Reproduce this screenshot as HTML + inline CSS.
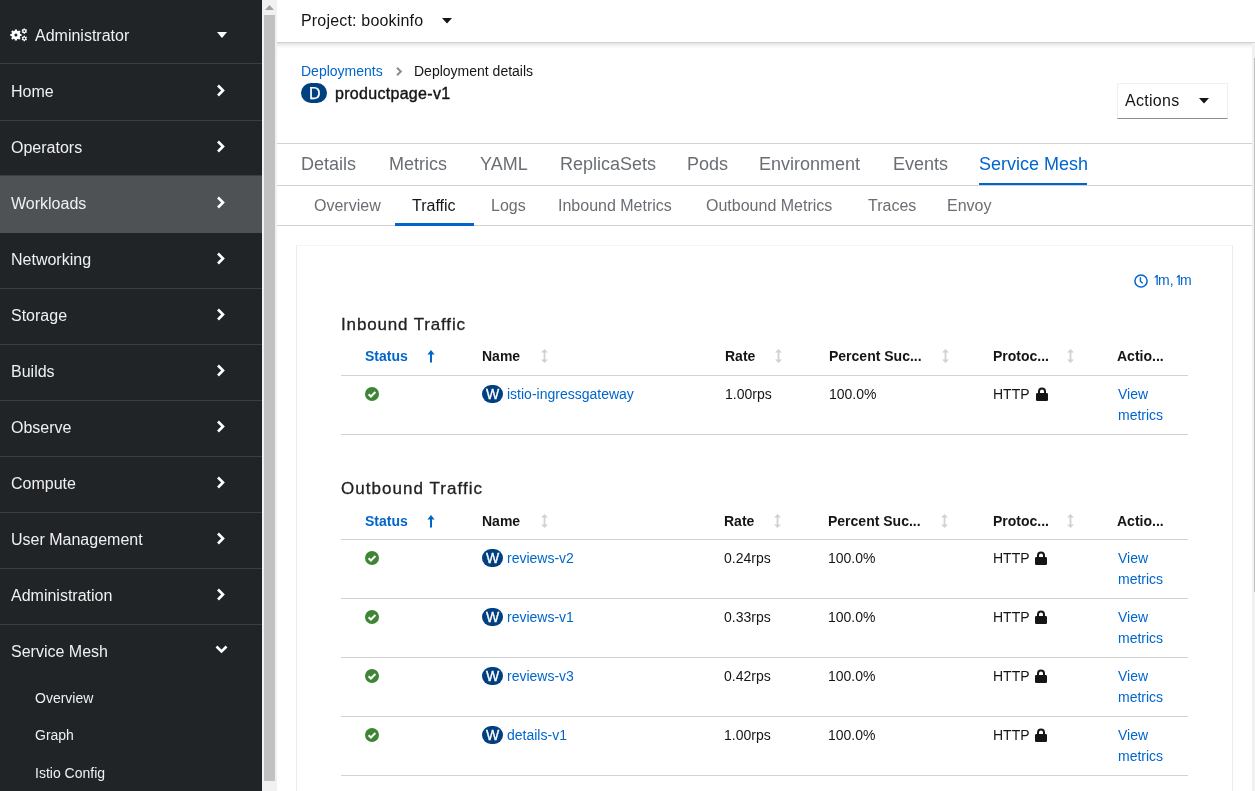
<!DOCTYPE html>
<html><head><meta charset="utf-8">
<style>
*{box-sizing:border-box;margin:0;padding:0}
html,body{-webkit-font-smoothing:antialiased;width:1255px;height:791px;overflow:hidden;background:#fff;font-family:"Liberation Sans",sans-serif;color:#151515}
.a{position:absolute;will-change:transform;white-space:nowrap;line-height:1}
#nav{position:absolute;left:0;top:0;width:262px;height:791px;background:#212427}
.nt{color:#f0f0f0;font-size:16px}
.dv{position:absolute;left:0;width:262px;height:1px;background:#3c3f42}
.chev{position:absolute;left:216px;width:10px;height:13px}
#sb{position:absolute;left:262px;top:0;width:15px;height:791px;background:#f1f1f1}
#main{position:absolute;left:277px;top:0;width:978px;height:791px;background:#fff}
.tab{font-size:18px;color:#6a6e73}
.stab{font-size:16px;color:#6a6e73}
.hd{font-size:14px;font-weight:bold;color:#151515}
.cell{font-size:14px;color:#151515}
.lnk{color:#0066cc}
.bdr{position:absolute;height:1px;background:#d2d2d2}
.badge{position:absolute;background:#004080;color:#fff;border-radius:10px;text-align:center}
</style></head><body>
<div id="nav">
  <!-- gear -->
  <svg class="a" style="left:10px;top:28px" width="18" height="14" viewBox="0 0 18 14"><path fill="#fff" fill-rule="evenodd" d="M4.78 2.64 L4.79 1.41 L7.01 1.41 L7.02 2.64 L8.19 3.13 L9.07 2.26 L10.64 3.83 L9.77 4.71 L10.26 5.88 L11.49 5.89 L11.49 8.11 L10.26 8.12 L9.77 9.29 L10.64 10.17 L9.07 11.74 L8.19 10.87 L7.02 11.36 L7.01 12.59 L4.79 12.59 L4.78 11.36 L3.61 10.87 L2.73 11.74 L1.16 10.17 L2.03 9.29 L1.54 8.12 L0.31 8.11 L0.31 5.89 L1.54 5.88 L2.03 4.71 L1.16 3.83 L2.73 2.26 L3.61 3.13ZM7.40 7.00a1.5 1.5 0 1 0 -3.00 0a1.5 1.5 0 1 0 3.00 0ZM13.61 1.12 L13.58 0.40 L15.02 0.40 L14.99 1.12 L15.67 1.51 L16.28 1.12 L17.00 2.38 L16.36 2.71 L16.36 3.49 L17.00 3.82 L16.28 5.08 L15.67 4.69 L14.99 5.08 L15.02 5.80 L13.58 5.80 L13.61 5.08 L12.93 4.69 L12.32 5.08 L11.60 3.82 L12.24 3.49 L12.24 2.71 L11.60 2.38 L12.32 1.12 L12.93 1.51ZM15.20 3.10a0.9 0.9 0 1 0 -1.80 0a0.9 0.9 0 1 0 1.80 0ZM13.61 8.52 L13.58 7.80 L15.02 7.80 L14.99 8.52 L15.67 8.91 L16.28 8.52 L17.00 9.78 L16.36 10.11 L16.36 10.89 L17.00 11.22 L16.28 12.48 L15.67 12.09 L14.99 12.48 L15.02 13.20 L13.58 13.20 L13.61 12.48 L12.93 12.09 L12.32 12.48 L11.60 11.22 L12.24 10.89 L12.24 10.11 L11.60 9.78 L12.32 8.52 L12.93 8.91ZM15.20 10.50a0.9 0.9 0 1 0 -1.80 0a0.9 0.9 0 1 0 1.80 0Z"/></svg>
  <div class="a nt" style="left:35px;top:27.5px">Administrator</div>
  <svg class="a" style="left:217px;top:32px" width="10" height="7" viewBox="0 0 10 7"><path fill="#fff" d="M0 0h10L5 6z"/></svg>

  <div class="dv" style="top:63px"></div>
  <div class="a nt" style="left:11px;top:83.6px">Home</div>
  <div class="dv" style="top:120px"></div>
  <div class="a nt" style="left:11px;top:139.6px">Operators</div>
  <div class="dv" style="top:175px"></div>
  <div style="position:absolute;left:0;top:176px;width:262px;height:56.5px;background:#4f5255"></div>
  <div class="a nt" style="left:11px;top:195.6px">Workloads</div>
  <div class="dv" style="top:231px;display:none"></div>
  <div class="a nt" style="left:11px;top:251.6px">Networking</div>
  <div class="dv" style="top:288px"></div>
  <div class="a nt" style="left:11px;top:307.6px">Storage</div>
  <div class="dv" style="top:344px"></div>
  <div class="a nt" style="left:11px;top:363.6px">Builds</div>
  <div class="dv" style="top:400px"></div>
  <div class="a nt" style="left:11px;top:419.6px">Observe</div>
  <div class="dv" style="top:456px"></div>
  <div class="a nt" style="left:11px;top:475.6px">Compute</div>
  <div class="dv" style="top:512px"></div>
  <div class="a nt" style="left:11px;top:531.6px">User Management</div>
  <div class="dv" style="top:568px"></div>
  <div class="a nt" style="left:11px;top:587.6px">Administration</div>
  <div class="dv" style="top:624px"></div>
  <div class="a nt" style="left:11px;top:643.6px">Service Mesh</div>
  <div class="a nt" style="left:35px;top:691.2px;font-size:14px">Overview</div>
  <div class="a nt" style="left:35px;top:728.3px;font-size:14px">Graph</div>
  <div class="a nt" style="left:35px;top:765.7px;font-size:14px">Istio Config</div>

  <svg class="chev" style="top:84px" viewBox="0 0 10 13"><path fill="none" stroke="#fff" stroke-width="2.6" d="M2 1.5l5 5-5 5"/></svg>
  <svg class="chev" style="top:140px" viewBox="0 0 10 13"><path fill="none" stroke="#fff" stroke-width="2.6" d="M2 1.5l5 5-5 5"/></svg>
  <svg class="chev" style="top:196px" viewBox="0 0 10 13"><path fill="none" stroke="#fff" stroke-width="2.6" d="M2 1.5l5 5-5 5"/></svg>
  <svg class="chev" style="top:252px" viewBox="0 0 10 13"><path fill="none" stroke="#fff" stroke-width="2.6" d="M2 1.5l5 5-5 5"/></svg>
  <svg class="chev" style="top:308px" viewBox="0 0 10 13"><path fill="none" stroke="#fff" stroke-width="2.6" d="M2 1.5l5 5-5 5"/></svg>
  <svg class="chev" style="top:364px" viewBox="0 0 10 13"><path fill="none" stroke="#fff" stroke-width="2.6" d="M2 1.5l5 5-5 5"/></svg>
  <svg class="chev" style="top:420px" viewBox="0 0 10 13"><path fill="none" stroke="#fff" stroke-width="2.6" d="M2 1.5l5 5-5 5"/></svg>
  <svg class="chev" style="top:476px" viewBox="0 0 10 13"><path fill="none" stroke="#fff" stroke-width="2.6" d="M2 1.5l5 5-5 5"/></svg>
  <svg class="chev" style="top:532px" viewBox="0 0 10 13"><path fill="none" stroke="#fff" stroke-width="2.6" d="M2 1.5l5 5-5 5"/></svg>
  <svg class="chev" style="top:588px" viewBox="0 0 10 13"><path fill="none" stroke="#fff" stroke-width="2.6" d="M2 1.5l5 5-5 5"/></svg>
  <svg class="a" style="left:215px;top:644px" width="13" height="11" viewBox="0 0 13 11"><path fill="none" stroke="#fff" stroke-width="2.6" d="M1.5 2.5l5 5 5-5"/></svg>
</div>

<div id="sb">
  <svg class="a" style="left:3px;top:5px" width="9" height="6" viewBox="0 0 9 6"><path fill="#a3a3a3" d="M4.5 0L9 5H0z"/></svg>
  <div style="position:absolute;left:2px;top:15px;width:11px;height:766px;background:#c1c1c1"></div>
</div>

<div id="main"></div>
<div style="position:absolute;left:277px;top:0;width:978px;height:42px;background:#fff"></div>
<div style="position:absolute;left:277px;top:42px;width:978px;height:1px;background:#d2d2d2"></div>
<div style="position:absolute;left:277px;top:43px;width:975px;height:6px;background:linear-gradient(#e2e2e2,#f6f6f6 50%,#fff)"></div>
<div class="a " style="left:301px;top:13.3px;font-size:16px;letter-spacing:.18px">Project: bookinfo</div>
<svg class="a" style="left:442px;top:18px" width="10" height="6" viewBox="0 0 10 6"><path fill="#151515" d="M0 0h10L5 5.5z"/></svg>
<div class="a " style="left:301px;top:63.85px;font-size:14px;color:#0066cc">Deployments</div>
<svg class="a" style="left:396px;top:67px" width="7" height="9" viewBox="0 0 7 9"><path fill="none" stroke="#8a8d90" stroke-width="2" d="M1 .8l3.8 3.7L1 8.2"/></svg>
<div class="a " style="left:414px;top:63.85px;font-size:14px;">Deployment details</div>
<div class="badge" style="left:301px;top:83px;width:26px;height:20px;border-radius:10px"></div>
<div class="a " style="left:308.5px;top:86.3px;font-size:16px;color:#fff;-webkit-text-stroke:.25px #fff">D</div>
<div class="a " style="left:335px;top:85.8px;font-size:16px;letter-spacing:.3px;-webkit-text-stroke:.4px #151515">productpage-v1</div>
<div style="position:absolute;left:1117px;top:83px;width:111px;height:36px;border:1px solid #f0f0f0;border-bottom-color:#8a8d90"></div>
<div class="a " style="left:1125px;top:92.66px;font-size:16px;letter-spacing:.3px">Actions</div>
<svg class="a" style="left:1199px;top:98px" width="10" height="6" viewBox="0 0 10 6"><path fill="#151515" d="M0 0h10L5 5.5z"/></svg>
<div class="bdr" style="left:277px;top:143px;width:978px"></div>
<div class="bdr" style="left:277px;top:185px;width:978px"></div>
<div class="a tab" style="left:301px;top:154.66px;font-size:18px;">Details</div>
<div class="a tab" style="left:389px;top:154.66px;font-size:18px;">Metrics</div>
<div class="a tab" style="left:480px;top:154.66px;font-size:18px;">YAML</div>
<div class="a tab" style="left:560px;top:154.66px;font-size:18px;">ReplicaSets</div>
<div class="a tab" style="left:687px;top:154.66px;font-size:18px;">Pods</div>
<div class="a tab" style="left:759px;top:154.66px;font-size:18px;">Environment</div>
<div class="a tab" style="left:893px;top:154.66px;font-size:18px;">Events</div>
<div class="a " style="left:979px;top:154.66px;font-size:18px;color:#0066cc">Service Mesh</div>
<div style="position:absolute;left:979px;top:183px;width:108px;height:2px;background:#0066cc"></div>
<div class="a stab" style="left:313.5px;top:198.46px;font-size:16px;">Overview</div>
<div class="a stab" style="left:490.8px;top:198.46px;font-size:16px;">Logs</div>
<div class="a stab" style="left:557.8px;top:198.46px;font-size:16px;">Inbound Metrics</div>
<div class="a stab" style="left:705.8px;top:198.46px;font-size:16px;">Outbound Metrics</div>
<div class="a stab" style="left:868px;top:198.46px;font-size:16px;">Traces</div>
<div class="a stab" style="left:946.7px;top:198.46px;font-size:16px;">Envoy</div>
<div class="a " style="left:412px;top:198.46px;font-size:16px;">Traffic</div>
<div class="bdr" style="left:277px;top:225px;width:978px"></div>
<div style="position:absolute;left:395px;top:223px;width:79px;height:3px;background:#0066cc"></div>
<div style="position:absolute;left:296px;top:245px;width:937px;height:600px;border:1px solid #ececec;border-top-color:#f4f4f4"></div>
<svg class="a" style="left:1134px;top:274px" width="14" height="14" viewBox="0 0 14 14"><circle cx="7" cy="7" r="6.1" fill="none" stroke="#0066cc" stroke-width="1.5"/><path fill="none" stroke="#0066cc" stroke-width="1.4" d="M6.4 3.2v4l2.3 2"/></svg>
<svg class="a" style="left:1153.5px;top:275px" width="4" height="10" viewBox="0 0 4 10"><path fill="#0066cc" d="M2.5 0H3.8V10H2.5V1.9L0.6 3.1V1.9z"/></svg><div class="a" style="left:1157.9px;top:273.15px;font-size:14px;color:#0066cc">m,</div><svg class="a" style="left:1175.6px;top:275px" width="4" height="10" viewBox="0 0 4 10"><path fill="#0066cc" d="M2.5 0H3.8V10H2.5V1.9L0.6 3.1V1.9z"/></svg><div class="a" style="left:1179.8px;top:273.15px;font-size:14px;color:#0066cc">m</div>
<div class="a " style="left:341px;top:315.9px;font-size:17px;color:#222;letter-spacing:.85px;-webkit-text-stroke:.3px #222">Inbound Traffic</div>
<div class="a hd" style="left:365px;top:349.15px;font-size:14px;color:#0066cc">Status</div>
<svg class="a" style="left:427px;top:350px" width="8" height="13" viewBox="0 0 8 13"><path fill="#0066cc" d="M4 0L7.6 4.6H5V12.5H3V4.6H.4z"/></svg>
<div class="a hd" style="left:482px;top:349.15px;font-size:14px;">Name</div>
<svg class="a" style="left:541px;top:349.2px" width="7" height="14" viewBox="0 0 7 14"><path fill="#d2d2d2" d="M3.5 0L7 3.6H4.4v6.8H7L3.5 14 0 10.4h2.6V3.6H0z"/></svg>
<div class="a hd" style="left:725px;top:349.15px;font-size:14px;">Rate</div>
<svg class="a" style="left:774.5px;top:349.2px" width="7" height="14" viewBox="0 0 7 14"><path fill="#d2d2d2" d="M3.5 0L7 3.6H4.4v6.8H7L3.5 14 0 10.4h2.6V3.6H0z"/></svg>
<div class="a hd" style="left:829px;top:349.15px;font-size:14px;">Percent Suc...</div>
<svg class="a" style="left:942px;top:349.2px" width="7" height="14" viewBox="0 0 7 14"><path fill="#d2d2d2" d="M3.5 0L7 3.6H4.4v6.8H7L3.5 14 0 10.4h2.6V3.6H0z"/></svg>
<div class="a hd" style="left:992.6px;top:349.15px;font-size:14px;">Protoc...</div>
<svg class="a" style="left:1067px;top:349.2px" width="7" height="14" viewBox="0 0 7 14"><path fill="#d2d2d2" d="M3.5 0L7 3.6H4.4v6.8H7L3.5 14 0 10.4h2.6V3.6H0z"/></svg>
<div class="a hd" style="left:1117.4px;top:349.15px;font-size:14px;">Actio...</div>
<div class="bdr" style="left:341px;top:375px;width:847px"></div>
<svg class="a" style="left:365px;top:387px" width="14" height="14" viewBox="0 0 14 14"><circle cx="7" cy="7" r="7" fill="#3e8635"/><path fill="none" stroke="#fff" stroke-width="2" d="M3.6 7.2l2.3 2.3 4.5-4.5"/></svg>
<div class="badge" style="left:482px;top:384.5px;width:21px;height:18px;border-radius:9px"></div>
<div class="a " style="left:486px;top:387.15px;font-size:14px;color:#fff;-webkit-text-stroke:.3px #fff">W</div>
<div class="a lnk" style="left:506.8px;top:387.15px;font-size:14px;">istio-ingressgateway</div>
<div class="a cell" style="left:724.5px;top:387.15px;font-size:14px;">1.00rps</div>
<div class="a cell" style="left:829px;top:387.15px;font-size:14px;">100.0%</div>
<div class="a cell" style="left:992.6px;top:387.15px;font-size:14px;">HTTP</div>
<svg class="a" style="left:1036.0px;top:386.5px" width="12" height="14" viewBox="0 0 12 14"><path fill="none" stroke="#151515" stroke-width="2" d="M3 6.5V4.5a3 3 0 016 0v2"/><rect x="0" y="6" width="12" height="8" rx="1.3" fill="#151515"/></svg>
<div class="a lnk" style="left:1117.5px;top:387.15px;font-size:14px;">View</div>
<div class="a lnk" style="left:1117.5px;top:407.95px;font-size:14px;">metrics</div>
<div class="bdr" style="left:341px;top:434px;width:847px"></div>
<div class="a " style="left:341px;top:480.1px;font-size:17px;color:#222;letter-spacing:1.05px;-webkit-text-stroke:.3px #222">Outbound Traffic</div>
<div class="a hd" style="left:365px;top:513.65px;font-size:14px;color:#0066cc">Status</div>
<svg class="a" style="left:427px;top:514.5px" width="8" height="13" viewBox="0 0 8 13"><path fill="#0066cc" d="M4 0L7.6 4.6H5V12.5H3V4.6H.4z"/></svg>
<div class="a hd" style="left:482px;top:513.65px;font-size:14px;">Name</div>
<svg class="a" style="left:541px;top:513.7px" width="7" height="14" viewBox="0 0 7 14"><path fill="#d2d2d2" d="M3.5 0L7 3.6H4.4v6.8H7L3.5 14 0 10.4h2.6V3.6H0z"/></svg>
<div class="a hd" style="left:724px;top:513.65px;font-size:14px;">Rate</div>
<svg class="a" style="left:773.5px;top:513.7px" width="7" height="14" viewBox="0 0 7 14"><path fill="#d2d2d2" d="M3.5 0L7 3.6H4.4v6.8H7L3.5 14 0 10.4h2.6V3.6H0z"/></svg>
<div class="a hd" style="left:828px;top:513.65px;font-size:14px;">Percent Suc...</div>
<svg class="a" style="left:941px;top:513.7px" width="7" height="14" viewBox="0 0 7 14"><path fill="#d2d2d2" d="M3.5 0L7 3.6H4.4v6.8H7L3.5 14 0 10.4h2.6V3.6H0z"/></svg>
<div class="a hd" style="left:992.6px;top:513.65px;font-size:14px;">Protoc...</div>
<svg class="a" style="left:1067px;top:513.7px" width="7" height="14" viewBox="0 0 7 14"><path fill="#d2d2d2" d="M3.5 0L7 3.6H4.4v6.8H7L3.5 14 0 10.4h2.6V3.6H0z"/></svg>
<div class="a hd" style="left:1117.4px;top:513.65px;font-size:14px;">Actio...</div>
<div class="bdr" style="left:341px;top:539px;width:847px"></div>
<svg class="a" style="left:365px;top:551px" width="14" height="14" viewBox="0 0 14 14"><circle cx="7" cy="7" r="7" fill="#3e8635"/><path fill="none" stroke="#fff" stroke-width="2" d="M3.6 7.2l2.3 2.3 4.5-4.5"/></svg>
<div class="badge" style="left:482px;top:548.5px;width:21px;height:18px;border-radius:9px"></div>
<div class="a " style="left:486px;top:551.15px;font-size:14px;color:#fff;-webkit-text-stroke:.3px #fff">W</div>
<div class="a lnk" style="left:506.8px;top:551.15px;font-size:14px;">reviews-v2</div>
<div class="a cell" style="left:723.5px;top:551.15px;font-size:14px;">0.24rps</div>
<div class="a cell" style="left:828px;top:551.15px;font-size:14px;">100.0%</div>
<div class="a cell" style="left:992.6px;top:551.15px;font-size:14px;">HTTP</div>
<svg class="a" style="left:1034.5px;top:550.5px" width="12" height="14" viewBox="0 0 12 14"><path fill="none" stroke="#151515" stroke-width="2" d="M3 6.5V4.5a3 3 0 016 0v2"/><rect x="0" y="6" width="12" height="8" rx="1.3" fill="#151515"/></svg>
<div class="a lnk" style="left:1117.5px;top:551.15px;font-size:14px;">View</div>
<div class="a lnk" style="left:1117.5px;top:571.95px;font-size:14px;">metrics</div>
<div class="bdr" style="left:341px;top:598px;width:847px"></div>
<svg class="a" style="left:365px;top:610px" width="14" height="14" viewBox="0 0 14 14"><circle cx="7" cy="7" r="7" fill="#3e8635"/><path fill="none" stroke="#fff" stroke-width="2" d="M3.6 7.2l2.3 2.3 4.5-4.5"/></svg>
<div class="badge" style="left:482px;top:607.5px;width:21px;height:18px;border-radius:9px"></div>
<div class="a " style="left:486px;top:610.15px;font-size:14px;color:#fff;-webkit-text-stroke:.3px #fff">W</div>
<div class="a lnk" style="left:506.8px;top:610.15px;font-size:14px;">reviews-v1</div>
<div class="a cell" style="left:723.5px;top:610.15px;font-size:14px;">0.33rps</div>
<div class="a cell" style="left:828px;top:610.15px;font-size:14px;">100.0%</div>
<div class="a cell" style="left:992.6px;top:610.15px;font-size:14px;">HTTP</div>
<svg class="a" style="left:1034.5px;top:609.5px" width="12" height="14" viewBox="0 0 12 14"><path fill="none" stroke="#151515" stroke-width="2" d="M3 6.5V4.5a3 3 0 016 0v2"/><rect x="0" y="6" width="12" height="8" rx="1.3" fill="#151515"/></svg>
<div class="a lnk" style="left:1117.5px;top:610.15px;font-size:14px;">View</div>
<div class="a lnk" style="left:1117.5px;top:630.95px;font-size:14px;">metrics</div>
<div class="bdr" style="left:341px;top:657px;width:847px"></div>
<svg class="a" style="left:365px;top:669px" width="14" height="14" viewBox="0 0 14 14"><circle cx="7" cy="7" r="7" fill="#3e8635"/><path fill="none" stroke="#fff" stroke-width="2" d="M3.6 7.2l2.3 2.3 4.5-4.5"/></svg>
<div class="badge" style="left:482px;top:666.5px;width:21px;height:18px;border-radius:9px"></div>
<div class="a " style="left:486px;top:669.15px;font-size:14px;color:#fff;-webkit-text-stroke:.3px #fff">W</div>
<div class="a lnk" style="left:506.8px;top:669.15px;font-size:14px;">reviews-v3</div>
<div class="a cell" style="left:723.5px;top:669.15px;font-size:14px;">0.42rps</div>
<div class="a cell" style="left:828px;top:669.15px;font-size:14px;">100.0%</div>
<div class="a cell" style="left:992.6px;top:669.15px;font-size:14px;">HTTP</div>
<svg class="a" style="left:1034.5px;top:668.5px" width="12" height="14" viewBox="0 0 12 14"><path fill="none" stroke="#151515" stroke-width="2" d="M3 6.5V4.5a3 3 0 016 0v2"/><rect x="0" y="6" width="12" height="8" rx="1.3" fill="#151515"/></svg>
<div class="a lnk" style="left:1117.5px;top:669.15px;font-size:14px;">View</div>
<div class="a lnk" style="left:1117.5px;top:689.95px;font-size:14px;">metrics</div>
<div class="bdr" style="left:341px;top:716px;width:847px"></div>
<svg class="a" style="left:365px;top:728px" width="14" height="14" viewBox="0 0 14 14"><circle cx="7" cy="7" r="7" fill="#3e8635"/><path fill="none" stroke="#fff" stroke-width="2" d="M3.6 7.2l2.3 2.3 4.5-4.5"/></svg>
<div class="badge" style="left:482px;top:725.5px;width:21px;height:18px;border-radius:9px"></div>
<div class="a " style="left:486px;top:728.15px;font-size:14px;color:#fff;-webkit-text-stroke:.3px #fff">W</div>
<div class="a lnk" style="left:506.8px;top:728.15px;font-size:14px;">details-v1</div>
<div class="a cell" style="left:723.5px;top:728.15px;font-size:14px;">1.00rps</div>
<div class="a cell" style="left:828px;top:728.15px;font-size:14px;">100.0%</div>
<div class="a cell" style="left:992.6px;top:728.15px;font-size:14px;">HTTP</div>
<svg class="a" style="left:1034.5px;top:727.5px" width="12" height="14" viewBox="0 0 12 14"><path fill="none" stroke="#151515" stroke-width="2" d="M3 6.5V4.5a3 3 0 016 0v2"/><rect x="0" y="6" width="12" height="8" rx="1.3" fill="#151515"/></svg>
<div class="a lnk" style="left:1117.5px;top:728.15px;font-size:14px;">View</div>
<div class="a lnk" style="left:1117.5px;top:748.95px;font-size:14px;">metrics</div>
<div class="bdr" style="left:341px;top:775px;width:847px"></div>
<div style="position:absolute;left:1252px;top:43px;width:3px;height:748px;background:#f1f1f1"></div>
<div style="position:absolute;left:1254px;top:58px;width:1px;height:534px;background:#c1c1c1"></div>
</body></html>
